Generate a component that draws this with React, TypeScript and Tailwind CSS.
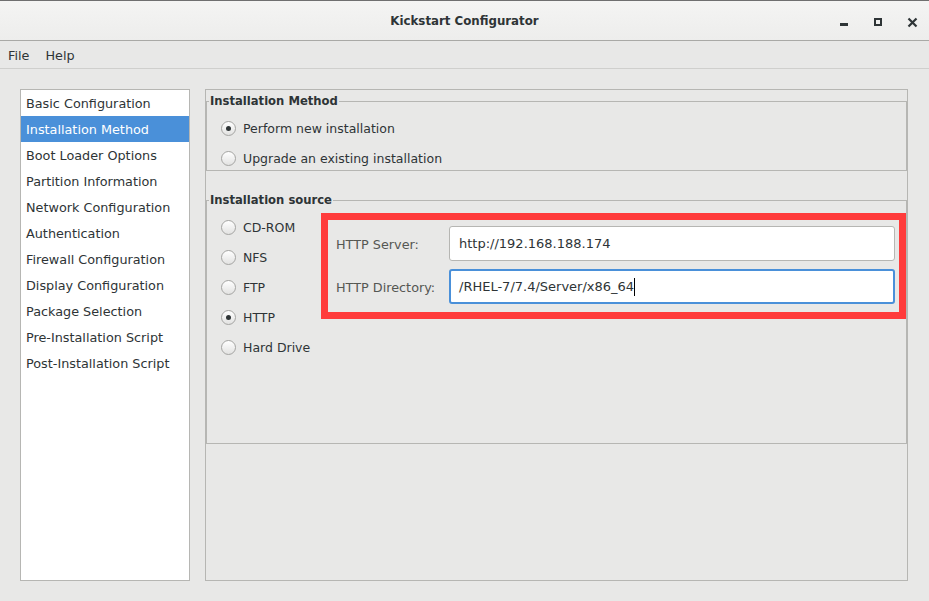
import React from "react";

const sections = [
  "Basic Configuration",
  "Installation Method",
  "Boot Loader Options",
  "Partition Information",
  "Network Configuration",
  "Authentication",
  "Firewall Configuration",
  "Display Configuration",
  "Package Selection",
  "Pre-Installation Script",
  "Post-Installation Script",
];

const sources = ["CD-ROM", "NFS", "FTP", "HTTP", "Hard Drive"];

function Radio({ checked }: { checked?: boolean }) {
  return (
    <span className="w-[15px] h-[15px] rounded-full border border-[#a4a4a2] bg-gradient-to-b from-white to-[#e2e2e1] flex items-center justify-center shrink-0">
      {checked && <span className="w-[5px] h-[5px] rounded-full bg-[#2e3436]" />}
    </span>
  );
}

function RadioRow({ label, checked }: { label: string; checked?: boolean }) {
  return (
    <div className="h-[24px] flex items-center gap-[7px]">
      <Radio checked={checked} />
      <span className="pt-[2px] text-[12.5px]">{label}</span>
    </div>
  );
}

export default function App() {
  const selected = "Installation Method";

  return (
    <div
      className="w-[929px] h-[601px] bg-[#e8e8e7] flex flex-col text-[12.8px] text-[#2e3436] overflow-hidden"
      style={{ fontFamily: '"DejaVu Sans", sans-serif' }}
    >
      {/* title bar */}
      <div className="h-[41px] shrink-0 grid grid-cols-[1fr_auto_1fr] items-center bg-gradient-to-b from-[#f4f4f3] to-[#ededec] border-t border-[#6f6f6f] border-b border-b-[#a9a9a6]">
        <div />
        <div className="font-bold text-[11.8px] pt-[3px]">Kickstart Configurator</div>
        <div className="flex justify-end h-full">
          <div className="w-[34px] h-full">
            <svg width="34" height="39" viewBox="0 0 34 39">
              <rect x="13" y="22" width="8" height="3" fill="#2e3436" />
            </svg>
          </div>
          <div className="w-[34px] h-full">
            <svg width="34" height="39" viewBox="0 0 34 39">
              <rect x="14" y="18" width="6" height="6" fill="none" stroke="#2e3436" strokeWidth="2" />
            </svg>
          </div>
          <div className="w-[34px] h-full">
            <svg width="34" height="39" viewBox="0 0 34 39">
              <path d="M13.5 17.5 L21.5 25.5 M21.5 17.5 L13.5 25.5" stroke="#2e3436" strokeWidth="2.2" />
            </svg>
          </div>
        </div>
      </div>

      {/* menu bar */}
      <div className="h-[28px] shrink-0 flex items-center pt-[2px] border-b border-[#cfcfcd]">
        <span className="px-[8px]">File</span>
        <span className="px-[8px]">Help</span>
      </div>

      {/* content */}
      <div className="flex pt-[20px] pl-[20px] gap-[15px]">
        <div className="w-[170px] h-[492px] bg-white border border-[#b6b6b3]">
          {sections.map((s) => (
            <div
              key={s}
              className={
                s === selected
                  ? "h-[26px] flex items-center pt-[2px] pl-[5px] bg-[#4a90d9] text-white"
                  : "h-[26px] flex items-center pt-[2px] pl-[5px] text-[#2e3436]"
              }
            >
              {s}
            </div>
          ))}
        </div>

        <div className="w-[703px] h-[492px] border border-[#b6b6b3]">
          <fieldset className="mt-[3px] border border-[#b6b6b3]">
            <legend className="ml-[2px] px-[1px] font-bold text-[11.6px] leading-[16px]">
              Installation Method
            </legend>
            <div className="pt-[7px] pl-[14px] flex flex-col gap-[6px]">
              <RadioRow label="Perform new installation" checked />
              <RadioRow label="Upgrade an existing installation" />
            </div>
          </fieldset>

          <fieldset className="mt-[21px] border border-[#b6b6b3]">
            <legend className="ml-[2px] px-[1px] font-bold text-[11.6px] leading-[16px]">
              Installation source
            </legend>
            <div className="h-[235px] flex items-start">
              <div className="w-[114px] pt-[7px] pl-[14px] flex flex-col gap-[6px]">
                {sources.map((s) => (
                  <RadioRow key={s} label={s} checked={s === "HTTP"} />
                ))}
              </div>
              <div className="flex-1 mt-[5px] border-[7px] border-[#ff3b3b] pt-[6px] pb-[8px] pl-[8px] pr-[4px] flex flex-col gap-[8px]">
                <div className="h-[35px] flex items-center">
                  <span className="w-[113px] pt-[2px] text-[#555753]">HTTP Server:</span>
                  <div className="flex-1 h-[35px] bg-white border border-[#b6b6b3] rounded-[3px] pl-[9px] flex items-center text-[13px]">
                    http://192.168.188.174
                  </div>
                </div>
                <div className="h-[35px] flex items-center">
                  <span className="w-[113px] pt-[2px] text-[#555753]">HTTP Directory:</span>
                  <div className="flex-1 h-[35px] bg-white border-2 border-[#4a90d9] rounded-[3px] pl-[8px] flex items-center text-[13px]">
                    <span>/RHEL-7/7.4/Server/x86_64</span>
                    <span className="w-[1px] h-[18px] bg-black" />
                  </div>
                </div>
              </div>
            </div>
          </fieldset>
        </div>
      </div>
    </div>
  );
}
